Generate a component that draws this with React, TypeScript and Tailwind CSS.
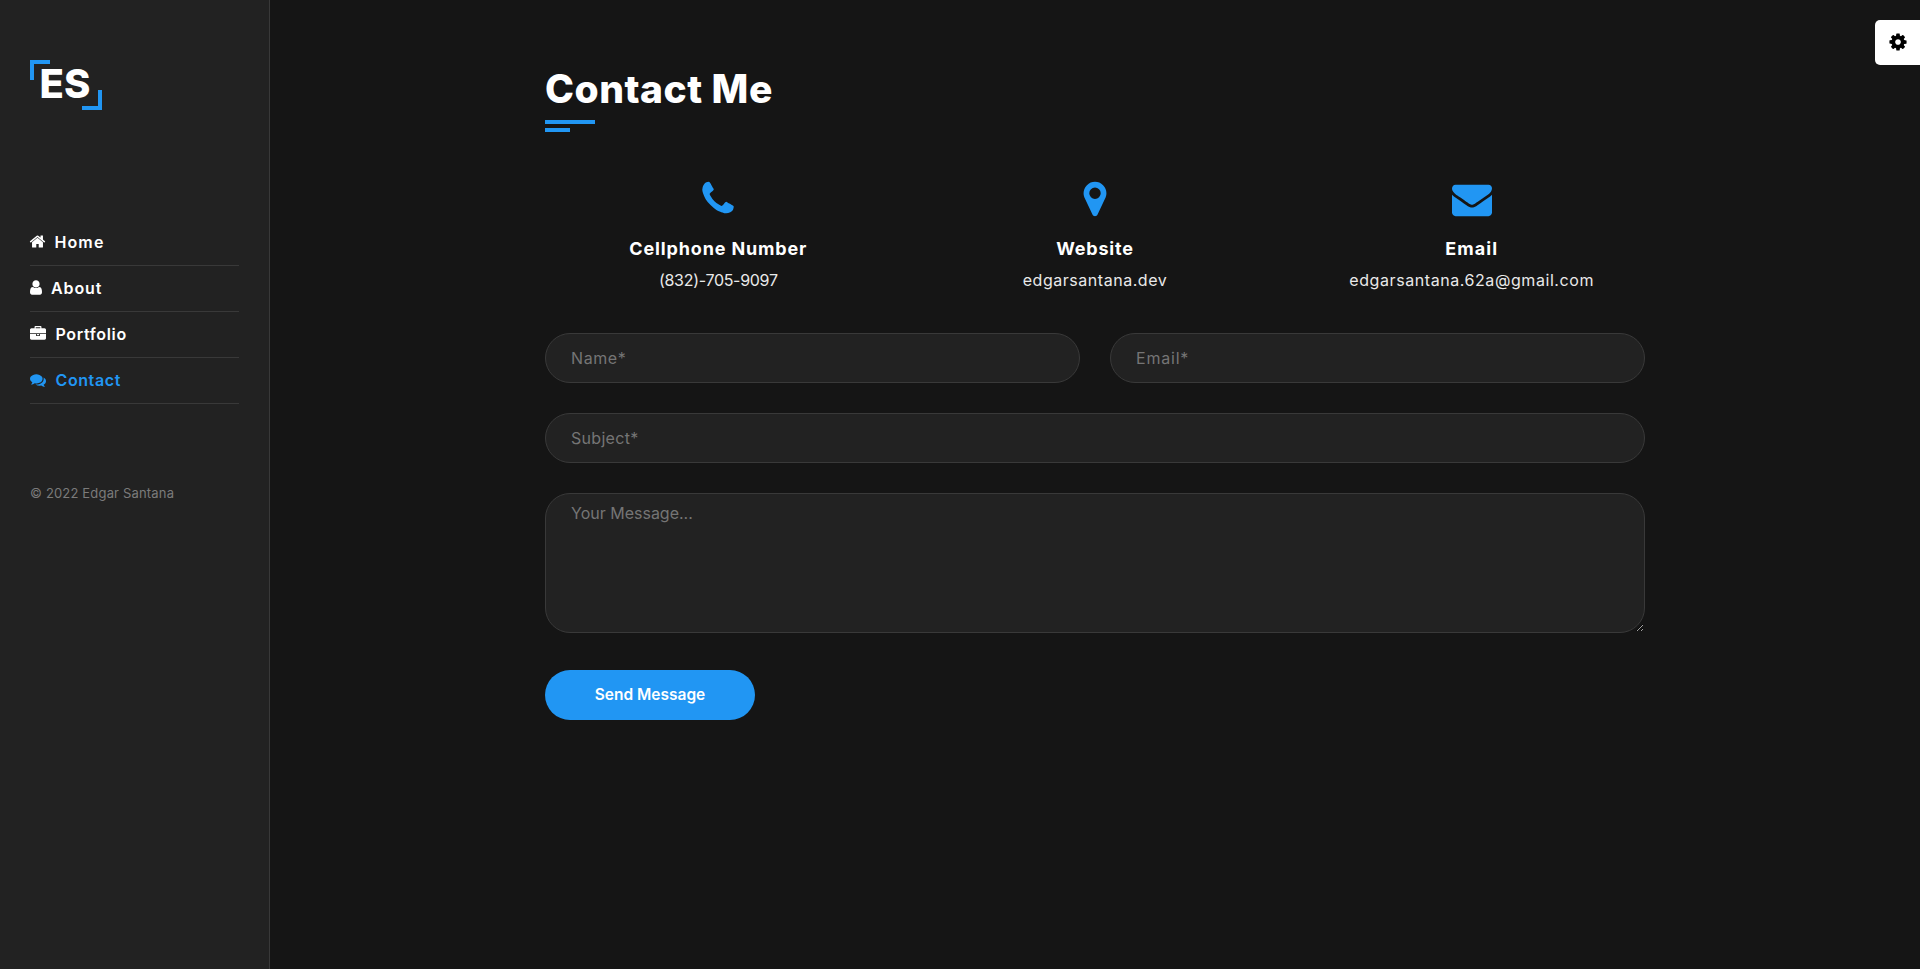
import type { ReactNode } from "react";

type IconProps = { path: string; viewBox?: string; className: string };

function Icon({ path, viewBox = "0 0 1792 1792", className }: IconProps) {
  return (
    <svg viewBox={viewBox} className={className} fill="currentColor" aria-hidden="true">
      <path d={path} />
    </svg>
  );
}

const HOME =
  "M1472 992v480q0 26-19 45t-45 19h-384v-384h-256v384h-384q-26 0-45-19t-19-45v-480q0-1 .5-3t.5-3l575-474 575 474q1 2 1 6zm223-69l-62 74q-8 9-21 11h-3q-13 0-21-7l-692-577-692 577q-12 8-24 7-13-2-21-11l-62-74q-8-10-7-23.5t11-21.5l719-599q32-26 76-26t76 26l244 204v-195q0-14 9-23t23-9h192q14 0 23 9t9 23v408l219 182q10 8 11 21.5t-7 23.5z";
const USER =
  "M1536 1399q0 109-62.5 187t-150.5 78h-854q-88 0-150.5-78t-62.5-187q0-85 8.5-160.5t31.5-152 58.5-131 94-89 134.5-34.5q131 128 313 128t313-128q76 0 134.5 34.5t94 89 58.5 131 31.5 152 8.5 160.5zm-256-887q0 159-112.5 271.5t-271.5 112.5-271.5-112.5-112.5-271.5 112.5-271.5 271.5-112.5 271.5 112.5 112.5 271.5z";
const BRIEFCASE =
  "M640 256h512v-128h-512v128zm1152 640v480q0 66-47 113t-113 47h-1472q-66 0-113-47t-47-113v-480h672v160q0 26 19 45t45 19h320q26 0 45-19t19-45v-160h672zm-768 0v128h-256v-128h256zm768-480v384h-1792v-384q0-66 47-113t113-47h352v-160q0-40 28-68t68-28h576q40 0 68 28t28 68v160h352q66 0 113 47t47 113z";
const COMMENTS =
  "M1408 768q0 139-94 257t-256.5 186.5-353.5 68.5q-86 0-176-16-124 88-278 128-36 9-86 16h-3q-11 0-20.5-8t-11.5-21q-1-3-1-6.5t.5-6.5 2-6l2.5-5 3.5-5.5 4-5 4.5-5 4-4.5q5-6 23-25t26-29.5 22.5-29 25-38.5 20.5-44q-124-72-195-177t-71-224q0-139 94-257t256.5-186.5 353.5-68.5 353.5 68.5 256.5 186.5 94 257zm384 256q0 120-71 224.5t-195 176.5q10 24 20.5 44t25 38.5 22.5 29 26 29.5 23 25q1 1 4 4.5t4.5 5 4 5 3.5 5.5l2.5 5 2 6 .5 6.5-1 6.5q-3 14-13 22t-22 7q-50-7-86-16-154-40-278-128-90 16-176 16-271 0-472-132 58 4 88 4 161 0 309-45t264-129q125-92 192-212t67-254q0-77-23-152 129 71 204 178t75 230z";
const PHONE =
  "M1600 1240q0 27-10 70.5t-21 68.5q-21 50-122 106-94 51-186 51-27 0-53-3.5t-57.5-12.5-47-14.5-55.5-20.5-49-18q-98-35-175-83-127-79-264-216t-216-264q-48-77-83-175-3-9-18-49t-20.5-55.5-14.5-47-12.5-57.5-3.5-53q0-92 51-186 56-101 106-122 25-11 68.5-21t70.5-10q14 0 21 3 18 6 53 76 11 19 30 54t35 63.5 31 53.5q3 4 17.5 25t21.5 35.5 7 28.5q0 20-28.5 50t-62 55-62 53-28.5 46q0 9 5 22.5t8.5 20.5 14 24 11.5 19q76 137 174 235t235 174q2 1 19 11.5t24 14 20.5 8.5 22.5 5q18 0 46-28.5t53-62 55-62 50-28.5q14 0 28.5 7t35.5 21.5 25 17.5q25 15 53.5 31t63.5 35 54 30q70 35 76 53 3 7 3 21z";
const MARKER =
  "M1152 640q0-106-75-181t-181-75-181 75-75 181 75 181 181 75 181-75 75-181zm256 0q0 109-33 179l-364 774q-16 33-47.5 52t-67.5 19-67.5-19-46.5-52l-365-774q-33-70-33-179 0-212 150-362t362-150 362 150 150 362z";
const ENVELOPE =
  "M1792 710v794q0 66-47 113t-113 47h-1472q-66 0-113-47t-47-113v-794q44 49 101 87 362 246 497 345 57 42 92.5 65.5t94.5 48 110 24.5h2q51 0 110-24.5t94.5-48 92.5-65.5q170-123 498-345 57-39 100-87zm0-294q0 79-49 151t-122 123q-376 261-468 325-10 7-42.5 31t-54 38.5-52 32.5-57.5 27-50 9h-2q-23 0-50-9t-57.5-27-52-32.5-54-38.5-42.5-31q-91-64-262-182.5t-205-142.5q-62-42-117-115.5t-55-136.5q0-78 41.5-130t118.5-52h1472q65 0 112.5 47t47.5 113z";
const COG =
  "M1152 896q0-106-75-181t-181-75-181 75-75 181 75 181 181 75 181-75 75-181zm512-109v222q0 12-8 23t-20 13l-185 28q-19 54-39 91 35 50 107 138 10 12 10 25t-9 23q-27 37-99 108t-94 71q-12 0-26-9l-138-108q-44 23-91 38-16 136-29 186-7 28-36 28h-222q-14 0-24.5-8.5t-11.5-21.5l-28-184q-49-16-90-37l-141 107q-10 9-25 9-14 0-25-11-126-114-165-168-7-10-7-23 0-12 8-23 15-21 51-66.5t54-70.5q-27-50-41-99l-183-27q-13-2-21-12.5t-8-23.5v-222q0-12 8-23t19-13l186-28q14-46 39-92-40-57-107-138-10-12-10-24 0-10 9-23 26-36 98.5-107.5t94.5-71.5q13 0 26 10l138 107q44-23 91-38 16-136 29-186 7-28 36-28h222q14 0 24.5 8.5t11.5 21.5l28 184q49 16 90 37l142-107q9-9 24-9 13 0 25 10 129 119 165 170 7 8 7 22 0 12-8 23-15 21-51 66.5t-54 70.5q26 50 41 98l183 28q13 2 21 12.5t8 23.5z";

function NavItem({ icon, text, active, children }: {
  icon: ReactNode; text: string; active?: boolean; children: string;
}) {
  return (
    <li className={`flex h-[46px] items-center border-b border-[#393939] pb-0.5 font-semibold ${active ? "text-[#2196f3]" : "text-white"}`}>
      {icon}
      <span className={text}>{children}</span>
    </li>
  );
}

function ContactInfo({ path, title, titleClass, value, valueClass }: {
  path: string; title: string; titleClass: string; value: string; valueClass: string;
}) {
  return (
    <div className="flex flex-1 flex-col items-center">
      <Icon path={path} className="size-10 text-[#2196f3]" />
      <h4 className={`mt-4 text-lg/7 font-bold text-white ${titleClass}`}>{title}</h4>
      <p className={`mt-[3px] text-base/7 text-[#e9e9e9] ${valueClass}`}>{value}</p>
    </div>
  );
}

const field =
  "block w-full rounded-[25px] border border-[#393939] bg-[#222222] px-[25px] text-base text-[#e9e9e9] outline-none placeholder:text-[#757575]";

export default function App() {
  return (
    <div className="flex h-[969px] w-full overflow-hidden bg-[#151515] font-['Inter',sans-serif]">
      <aside className="w-[270px] shrink-0 border-r border-[#393939] bg-[#222222] px-[30px] pt-[60px]">
        <div className="relative h-[50px] w-[72px]">
          <span className="absolute left-0 top-0 size-5 border-l-4 border-t-4 border-[#2196f3]" />
          <span className="block pl-[9.5px] text-[40px]/[48px] font-extrabold text-white">ES</span>
          <span className="absolute bottom-0 right-0 size-5 border-b-4 border-r-4 border-[#2196f3]" />
        </div>

        <ul className="mt-[110px] text-base">
          <NavItem icon={<Icon path={HOME} className="-ml-px size-[17px]" />} text="ml-[8.5px] tracking-[1.1px]">Home</NavItem>
          <NavItem icon={<Icon path={USER} viewBox="256 0 1280 1792" className="h-[17px] w-[12px]" />} text="ml-[9px] tracking-[0.9px]">About</NavItem>
          <NavItem icon={<Icon path={BRIEFCASE} className="size-4" />} text="ml-[9.5px] tracking-[0.65px]">Portfolio</NavItem>
          <NavItem active icon={<Icon path={COMMENTS} className="size-4" />} text="ml-[9.5px] tracking-[0.6px]">Contact</NavItem>
        </ul>

        <p className="mt-[79px] text-[13px]/[20px] tracking-[0.17px] text-[#7b7b7b]">© 2022 Edgar Santana</p>
      </aside>

      <main className="relative flex-1">
        <div className="mx-auto w-[1100px] pt-[64px]">
          <h1 className="text-[39px]/[50px] font-extrabold tracking-[0.5px] text-white">Contact Me</h1>
          <div className="mt-1.5 h-1 w-[50px] bg-[#2196f3]" />
          <div className="mt-1 h-1 w-[25px] bg-[#2196f3]" />

          <div className="-mx-[15px] mt-[47px] flex">
            <ContactInfo path={PHONE} title="Cellphone Number" titleClass="tracking-[0.85px]" value="(832)-705-9097" valueClass="tracking-[-0.3px]" />
            <ContactInfo path={MARKER} title="Website" titleClass="tracking-[0.8px]" value="edgarsantana.dev" valueClass="tracking-[0.53px]" />
            <ContactInfo path={ENVELOPE} title="Email" titleClass="tracking-[1.1px]" value="edgarsantana.62a@gmail.com" valueClass="tracking-[0.57px]" />
          </div>

          <form className="mt-[39px]" onSubmit={(e) => e.preventDefault()}>
            <div className="grid grid-cols-2 gap-[30px]">
              <input className={`${field} h-[50px] tracking-[0.6px]`} placeholder="Name*" />
              <input className={`${field} h-[50px] tracking-[0.8px]`} placeholder="Email*" />
              <input className={`${field} col-span-2 h-[50px] tracking-[0.3px]`} placeholder="Subject*" />
              <textarea className={`${field} col-span-2 h-[140px] resize py-[7px]`} placeholder="Your Message..." />
            </div>
            <button className="mt-[37px] flex h-[50px] w-[210px] items-center justify-center rounded-[25px] bg-[#2196f3] text-[15.5px] font-semibold text-white">
              Send Message
            </button>
          </form>
        </div>

        <button className="absolute right-0 top-5 flex h-[45px] w-[45px] items-center justify-center rounded-l-[5px] bg-white pb-px text-black">
          <Icon path={COG} className="size-5" />
        </button>
      </main>
    </div>
  );
}
